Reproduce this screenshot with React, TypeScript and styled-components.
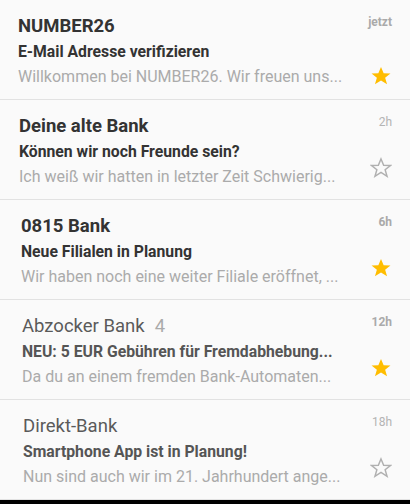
import React from "react";
import styled, { createGlobalStyle } from "styled-components";

const Global = createGlobalStyle`
  html, body { margin: 0; padding: 0; background: #000; }
  body { font-family: Roboto, "Noto Sans", "Liberation Sans", sans-serif; }
`;

const List = styled.ul`
  list-style: none;
  margin: 0;
  padding: 0;
  width: 410px;
  background: #fafafa;
`;

const Item = styled.li<{ $indent: number }>`
  box-sizing: border-box;
  height: 100px;
  padding: 14px 18px 0 ${(p) => p.$indent}px;
  border-bottom: 1px solid #e2e2e2;
  display: flex;
  flex-direction: column;
`;

const TopRow = styled.div`
  display: flex;
  align-items: flex-start;
  justify-content: space-between;
`;

const SenderLine = styled.div`
  display: flex;
  align-items: baseline;
  gap: 10px;
`;

const Sender = styled.span<{ $unread: boolean }>`
  font-size: 18.5px;
  line-height: 24px;
  font-weight: ${(p) => (p.$unread ? 700 : 400)};
  color: ${(p) => (p.$unread ? "#333" : "#5a5a5a")};
`;

const Count = styled.span`
  font-size: 18.5px;
  line-height: 24px;
  color: #aaa;
`;

const Time = styled.span<{ $bold: boolean }>`
  margin-top: 1px;
  font-size: 12px;
  line-height: 14px;
  font-weight: ${(p) => (p.$bold ? 700 : 400)};
  color: ${(p) => (p.$bold ? "#aaa" : "#b4b4b4")};
`;

const Subject = styled.div<{ $unread: boolean }>`
  margin-top: 1px;
  font-size: 15.75px;
  line-height: 25px;
  font-weight: 700;
  color: ${(p) => (p.$unread ? "#333" : "#555")};
  white-space: nowrap;
  overflow: hidden;
`;

const BottomRow = styled.div`
  display: flex;
  align-items: flex-start;
  justify-content: space-between;
`;

const Preview = styled.div`
  font-size: 16px;
  line-height: 25px;
  color: #ababab;
  white-space: nowrap;
  overflow: hidden;
`;

const StarBox = styled.span<{ $raised: boolean }>`
  display: flex;
  width: 22px;
  height: 22px;
  flex: none;
  margin-top: ${(p) => (p.$raised ? "-7px" : "1px")};
`;

const STAR =
  "M12 2.2 L14.9 9.1 L22.3 9.3 L16.5 13.9 L18.6 21.1 L12 16.9 L5.4 21.1 L7.5 13.9 L1.7 9.3 L9.1 9.1 Z";

function Star({ filled, raised }: { filled: boolean; raised: boolean }) {
  return (
    <StarBox $raised={raised}>
      <svg width="22" height="22" viewBox="0 0 24 24">
        {filled ? (
          <path d={STAR} fill="#ffbd00" />
        ) : (
          <path d={STAR} fill="none" stroke="#b0b0b0" strokeWidth="1.6" strokeLinejoin="miter" />
        )}
      </svg>
    </StarBox>
  );
}

type Mail = {
  sender: string;
  count?: number;
  time: string;
  subject: string;
  preview: string;
  unread: boolean;
  starred: boolean;
  boldTime: boolean;
  raised: boolean;
  indent: number;
};

const mails: Mail[] = [
  {
    sender: "NUMBER26",
    time: "jetzt",
    subject: "E-Mail Adresse verifizieren",
    preview: "Willkommen bei NUMBER26. Wir freuen uns...",
    unread: true,
    starred: true,
    boldTime: true,
    raised: false,
    indent: 18,
  },
  {
    sender: "Deine alte Bank",
    time: "2h",
    subject: "Können wir noch Freunde sein?",
    preview: "Ich weiß wir hatten in letzter Zeit Schwierig...",
    unread: true,
    starred: false,
    boldTime: false,
    raised: true,
    indent: 19,
  },
  {
    sender: "0815 Bank",
    time: "6h",
    subject: "Neue Filialen in Planung",
    preview: "Wir haben noch eine weiter Filiale eröffnet, ...",
    unread: true,
    starred: true,
    boldTime: true,
    raised: true,
    indent: 21,
  },
  {
    sender: "Abzocker Bank",
    count: 4,
    time: "12h",
    subject: "NEU: 5 EUR Gebühren für Fremdabhebung...",
    preview: "Da du an einem fremden Bank-Automaten...",
    unread: false,
    starred: true,
    boldTime: true,
    raised: true,
    indent: 22,
  },
  {
    sender: "Direkt-Bank",
    time: "18h",
    subject: "Smartphone App ist in Planung!",
    preview: "Nun sind auch wir im 21. Jahrhundert ange...",
    unread: false,
    starred: false,
    boldTime: false,
    raised: true,
    indent: 23,
  },
];

export default function App() {
  return (
    <>
      <Global />
      <List>
        {mails.map((m) => (
          <Item key={m.sender} $indent={m.indent}>
            <TopRow>
              <SenderLine>
                <Sender $unread={m.unread}>{m.sender}</Sender>
                {m.count !== undefined && <Count>{m.count}</Count>}
              </SenderLine>
              <Time $bold={m.boldTime}>{m.time}</Time>
            </TopRow>
            <Subject $unread={m.unread}>{m.subject}</Subject>
            <BottomRow>
              <Preview>{m.preview}</Preview>
              <Star filled={m.starred} raised={m.raised} />
            </BottomRow>
          </Item>
        ))}
      </List>
    </>
  );
}
